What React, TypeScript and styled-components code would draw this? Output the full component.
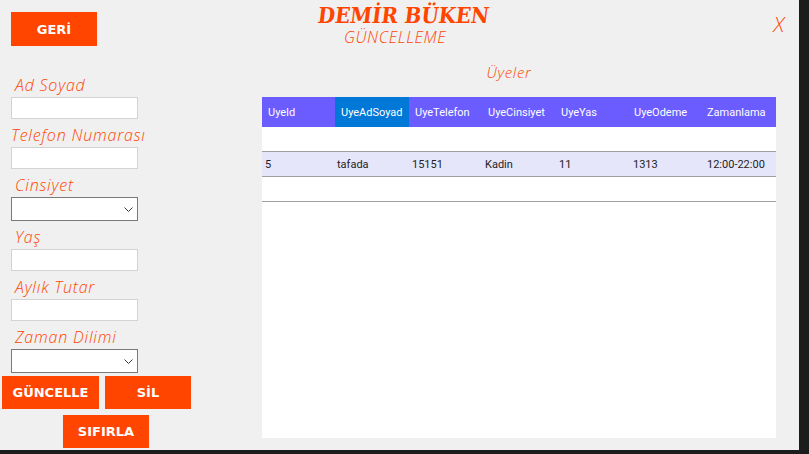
import React from "react";
import styled, { createGlobalStyle } from "styled-components";

const GlobalStyle = createGlobalStyle`
  html, body {
    margin: 0;
    padding: 0;
    background: #1c1c1c;
  }
  body {
    width: 809px;
    height: 454px;
    overflow: hidden;
  }
  * {
    box-sizing: border-box;
  }
`;

const ORANGE = "#ff4500";
const COLUMNS = "73px 74px 73px 73px 73px 73px 1fr";
const THIN = `"Open Sans", "DejaVu Sans", sans-serif`;

const Window = styled.div`
  width: 799px;
  height: 450px;
  background: #f0f0f0;
  display: flex;
  flex-direction: column;
  overflow: hidden;
`;

const TopBar = styled.header`
  height: 60px;
  display: grid;
  grid-template-columns: 1fr auto 1fr;
  align-items: start;
`;

const ActionButton = styled.button<{ $w: number; $h?: number }>`
  width: ${(p) => p.$w}px;
  height: ${(p) => p.$h ?? 33}px;
  background: ${ORANGE};
  border: none;
  padding: 0;
  color: #ffffff;
  font: bold 13px "DejaVu Sans", sans-serif;
  cursor: pointer;
`;

const BackButton = styled(ActionButton)`
  margin: 12px 0 0 11px;
  justify-self: start;
`;

const TitleBlock = styled.div`
  display: flex;
  flex-direction: column;
  margin-top: 2px;
  padding-left: 8px;
`;

const Brand = styled.h1`
  margin: 0;
  font: bold 22px/26px "DejaVu Serif", serif;
  font-stretch: condensed;
  color: ${ORANGE};
  white-space: nowrap;
  transform: skewX(-7deg);
`;

const Subtitle = styled.div`
  padding-left: 26px;
  font: italic 300 16px/18px ${THIN};
  letter-spacing: 0.6px;
  color: ${ORANGE};
`;

const CloseButton = styled.button`
  justify-self: end;
  margin: 12px 15px 0 0;
  padding: 0;
  background: none;
  border: none;
  font: italic 300 21px/24px ${THIN};
  color: ${ORANGE};
  cursor: pointer;
`;

const Main = styled.div`
  flex: 1;
  display: flex;
`;

const Form = styled.div`
  width: 262px;
  padding: 16px 0 0 11px;
  display: flex;
  flex-direction: column;
  gap: 7px;
`;

const Field = styled.div`
  display: flex;
  flex-direction: column;
`;

const Label = styled.label<{ $indent?: number }>`
  margin: 0 0 3px ${(p) => p.$indent ?? 4}px;
  font: italic 300 16px/18px ${THIN};
  letter-spacing: 0.8px;
  color: ${ORANGE};
  white-space: nowrap;
`;

const TextBox = styled.input`
  width: 127px;
  height: 22px;
  margin: 0;
  padding: 0 3px;
  border: 1px solid #d3d3d3;
  background: #ffffff;
  outline: none;
  font: 12px "Liberation Sans", sans-serif;
`;

const ComboWrap = styled.div`
  position: relative;
  width: 127px;
  height: 24px;
`;

const Select = styled.select`
  width: 100%;
  height: 100%;
  margin: 0;
  padding: 0 3px;
  appearance: none;
  border: 1px solid #7a7a7a;
  border-radius: 0;
  background: #ffffff;
  outline: none;
  font: 12px "Liberation Sans", sans-serif;
`;

const Chevron = styled.svg`
  position: absolute;
  right: 5px;
  top: 10px;
  pointer-events: none;
`;

const ButtonBlock = styled.div`
  display: flex;
  flex-direction: column;
  gap: 6px;
  margin: -4px 0 0 -9px;
`;

const ButtonRow = styled.div`
  display: flex;
  gap: 6px;
`;

const ResetButton = styled(ActionButton)`
  margin-left: 61px;
`;

const Panel = styled.section`
  flex: 1;
  margin-right: 23px;
  padding-top: 4px;
  display: flex;
  flex-direction: column;
`;

const PanelTitle = styled.h2`
  margin: 0 0 16px;
  padding-right: 20px;
  text-align: center;
  font: italic 300 15px/17px ${THIN};
  letter-spacing: 0.7px;
  color: ${ORANGE};
`;

const Grid = styled.div`
  height: 341px;
  background: #ffffff;
  display: flex;
  flex-direction: column;
`;

const HeaderRow = styled.div`
  display: grid;
  grid-template-columns: ${COLUMNS};
  height: 30px;
  background: #6b5cff;
`;

const HeaderCell = styled.div<{ $active?: boolean }>`
  display: flex;
  align-items: center;
  padding-left: 6px;
  background: ${(p) => (p.$active ? "#0078d7" : "transparent")};
  color: #ffffff;
  font: 11px Roboto, "Liberation Sans", sans-serif;
  white-space: nowrap;
  overflow: hidden;
`;

const Row = styled.div<{ $tone: string }>`
  display: grid;
  grid-template-columns: ${COLUMNS};
  height: 25px;
  border-bottom: 1px solid #a0a0a0;
  background: ${(p) => p.$tone};
`;

const Cell = styled.div<{ $pad: number }>`
  display: flex;
  align-items: center;
  padding-left: ${(p) => p.$pad}px;
  color: #1e1e1e;
  font: 11px Roboto, "Liberation Sans", sans-serif;
  white-space: nowrap;
  overflow: hidden;
`;

const headers = [
  "UyeId",
  "UyeAdSoyad",
  "UyeTelefon",
  "UyeCinsiyet",
  "UyeYas",
  "UyeOdeme",
  "Zamanlama",
];

// left inset of the cell text for each column
const cellPad = [3, 2, 3, 3, 4, 5, 6];

const rows: { tone: string; values: string[] }[] = [
  { tone: "#ffffff", values: [] },
  {
    tone: "#e6e6fa",
    values: ["5", "tafada", "15151", "Kadin", "11", "1313", "12:00-22:00"],
  },
  { tone: "#ffffff", values: [] },
];

const ComboBox: React.FC = () => (
  <ComboWrap>
    <Select defaultValue="">
      <option value=""></option>
    </Select>
    <Chevron width="9" height="5" viewBox="0 0 9 5">
      <path d="M0.5 0.5 L4.5 4.5 L8.5 0.5" fill="none" stroke="#3a3a3a" strokeWidth="1" />
    </Chevron>
  </ComboWrap>
);

export default function App() {
  return (
    <>
      <GlobalStyle />
      <Window>
        <TopBar>
          <BackButton $w={86} $h={34}>GERİ</BackButton>
          <TitleBlock>
            <Brand>DEMİR BÜKEN</Brand>
            <Subtitle>GÜNCELLEME</Subtitle>
          </TitleBlock>
          <CloseButton>X</CloseButton>
        </TopBar>
        <Main>
          <Form>
            <Field>
              <Label>Ad Soyad</Label>
              <TextBox />
            </Field>
            <Field>
              <Label $indent={0}>Telefon Numarası</Label>
              <TextBox />
            </Field>
            <Field>
              <Label>Cinsiyet</Label>
              <ComboBox />
            </Field>
            <Field>
              <Label>Yaş</Label>
              <TextBox />
            </Field>
            <Field>
              <Label>Aylık Tutar</Label>
              <TextBox />
            </Field>
            <Field>
              <Label>Zaman Dilimi</Label>
              <ComboBox />
            </Field>
            <ButtonBlock>
              <ButtonRow>
                <ActionButton $w={97}>GÜNCELLE</ActionButton>
                <ActionButton $w={86}>SİL</ActionButton>
              </ButtonRow>
              <ResetButton $w={86}>SIFIRLA</ResetButton>
            </ButtonBlock>
          </Form>
          <Panel>
            <PanelTitle>Üyeler</PanelTitle>
            <Grid>
              <HeaderRow>
                {headers.map((h) => (
                  <HeaderCell key={h} $active={h === "UyeAdSoyad"}>
                    {h}
                  </HeaderCell>
                ))}
              </HeaderRow>
              {rows.map((r, i) => (
                <Row key={i} $tone={r.tone}>
                  {headers.map((h, j) => (
                    <Cell key={h} $pad={cellPad[j]}>
                      {r.values[j] ?? ""}
                    </Cell>
                  ))}
                </Row>
              ))}
            </Grid>
          </Panel>
        </Main>
      </Window>
    </>
  );
}
